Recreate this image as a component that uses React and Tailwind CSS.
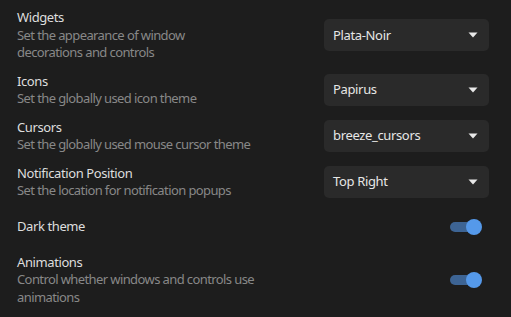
import React from "react";

const rows = [
  { title: "Widgets", desc: ["Set the appearance of window", "decorations and controls"], kind: "select", value: "Plata-Noir" },
  { title: "Icons", desc: ["Set the globally used icon theme"], kind: "select", value: "Papirus" },
  { title: "Cursors", desc: ["Set the globally used mouse cursor theme"], kind: "select", value: "breeze_cursors" },
  { title: "Notification Position", desc: ["Set the location for notification popups"], kind: "select", value: "Top Right" },
  { title: "Dark theme", desc: [], kind: "toggle", short: true },
  { title: "Animations", desc: ["Control whether windows and controls use", "animations"], kind: "toggle" },
];

function Select({ value }) {
  return (
    <div className="w-[165px] h-[32px] rounded-[5px] bg-[#2a2a2a] flex items-center justify-between pl-[9px] pr-[11px] text-[#e6e6e6] tracking-[-0.35px]">
      <span>{value}</span>
      <svg width="10" height="6" viewBox="0 0 10 6">
        <path d="M0.5 0.5 L9.5 0.5 L5 5.5 Z" fill="#e8e8e8" />
      </svg>
    </div>
  );
}

function Toggle() {
  return (
    <div className="relative w-[32px] h-[16px] mr-[7px] flex items-center">
      <div className="w-[30px] h-[10px] rounded-full bg-[#3d6494]" />
      <div className="absolute right-0 top-0 w-[16px] h-[16px] rounded-full bg-[#5599ea]" />
    </div>
  );
}

export default function App() {
  return (
    <div
      className="w-[511px] h-[317px] bg-[#1d1d1d] pt-[9px] pl-[17px] pr-[22px] flex flex-col gap-[11px] text-[13px] leading-[17.5px] overflow-hidden"
      style={{ fontFamily: '"Noto Sans", sans-serif' }}
    >
      {rows.map((r) => (
        <div key={r.title} className={"flex items-center justify-between " + (r.short ? "min-h-[32px]" : "min-h-[35px]")}>
          <div className="flex flex-col">
            <div className="text-[#dedede] tracking-[-0.4px]">{r.title}</div>
            {r.desc.map((d) => (
              <div key={d} className="text-[#888888] tracking-[-0.6px]">{d}</div>
            ))}
          </div>
          {r.kind === "select" ? <Select value={r.value} /> : <Toggle />}
        </div>
      ))}
    </div>
  );
}
